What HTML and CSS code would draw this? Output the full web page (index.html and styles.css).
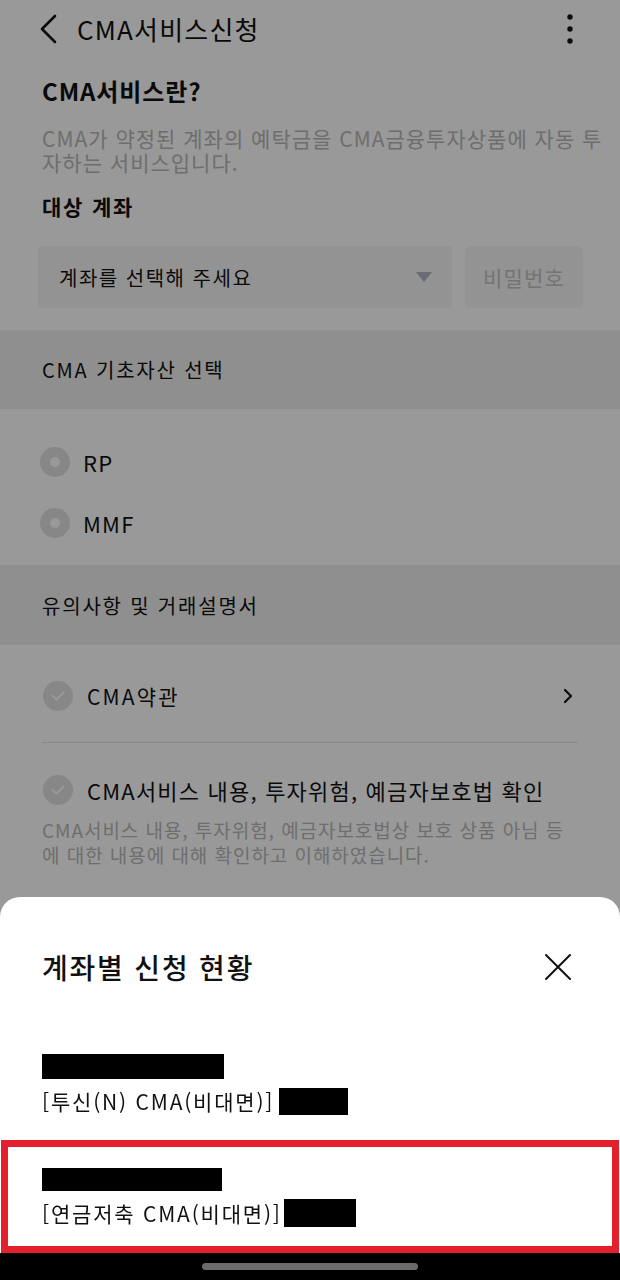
FILE: index.html
```html
<!DOCTYPE html>
<html lang="ko">
<head>
<meta charset="utf-8">
<title>CMA서비스신청</title>
<link rel="stylesheet" href="styles.css">
</head>
<body>
<div class="screen">
  <header class="appbar">
    <svg class="back" width="18" height="30" viewBox="0 0 18 30"><polyline points="16,2 3,15 16,28" fill="none" stroke="#111" stroke-width="2.6" stroke-linecap="round" stroke-linejoin="round"/></svg>
    <h1 class="appbar-title">CMA서비스신청</h1>
    <svg class="kebab" width="8" height="32" viewBox="0 0 8 32"><circle cx="4" cy="4" r="2.7" fill="#111"/><circle cx="4" cy="16" r="2.7" fill="#111"/><circle cx="4" cy="28" r="2.7" fill="#111"/></svg>
  </header>

  <section class="intro">
    <h2 class="intro-title">CMA서비스란?</h2>
    <p class="intro-desc">CMA가 약정된 계좌의 예탁금을 CMA금융투자상품에 자동 투자하는 서비스입니다.</p>
    <h3 class="field-label">대상 계좌</h3>
    <div class="account-row">
      <div class="select"><span class="select-text">계좌를 선택해 주세요</span><span class="caret"></span></div>
      <div class="pw-btn">비밀번호</div>
    </div>
  </section>

  <div class="band">CMA 기초자산 선택</div>
  <section class="radios">
    <div class="radio"><span class="radio-dot"></span><span class="radio-label">RP</span></div>
    <div class="radio"><span class="radio-dot"></span><span class="radio-label">MMF</span></div>
  </section>

  <div class="band">유의사항 및 거래설명서</div>
  <section class="terms">
    <div class="term-row">
      <span class="check"><svg width="14" height="10" viewBox="0 0 14 10"><polyline points="1.5,5 5.5,8.5 12.5,1.5" fill="none" stroke="#fff" stroke-width="2" stroke-linecap="round" stroke-linejoin="round"/></svg></span>
      <span class="term-text">CMA약관</span>
      <svg class="chev" width="10" height="16" viewBox="0 0 10 16"><polyline points="2,2 8,8 2,14" fill="none" stroke="#111" stroke-width="2.2" stroke-linecap="round" stroke-linejoin="round"/></svg>
    </div>
    <div class="term-item">
      <div class="term-head">
        <span class="check"><svg width="14" height="10" viewBox="0 0 14 10"><polyline points="1.5,5 5.5,8.5 12.5,1.5" fill="none" stroke="#fff" stroke-width="2" stroke-linecap="round" stroke-linejoin="round"/></svg></span>
        <span class="term-text term-text-lg">CMA서비스 내용, 투자위험, 예금자보호법 확인</span>
      </div>
      <p class="term-desc">CMA서비스 내용, 투자위험, 예금자보호법상 보호 상품 아님 등에 대한 내용에 대해 확인하고 이해하였습니다.</p>
    </div>
  </section>
</div>

<div class="dim"></div>

<div class="sheet">
  <div class="sheet-head">
    <h2 class="sheet-title">계좌별 신청 현황</h2>
    <svg class="close" width="28" height="28" viewBox="0 0 28 28"><path d="M2 2 L26 26 M26 2 L2 26" stroke="#111" stroke-width="2" stroke-linecap="round"/></svg>
  </div>
  <div class="acct-list">
    <div class="acct">
      <div class="redact redact-no"></div>
      <div class="acct-name">[투신(N) CMA(비대면)]<span class="redact redact-tail"></span></div>
    </div>
    <div class="acct acct-marked">
      <div class="redact redact-no2"></div>
      <div class="acct-name">[연금저축 CMA(비대면)]<span class="redact redact-tail2"></span></div>
    </div>
  </div>
  <div class="navbar"><span class="nav-pill"></span></div>
</div>
</body>
</html>
```

FILE: styles.css
```css
* { box-sizing: border-box; }
html, body { margin: 0; padding: 0; }
body {
  width: 620px;
  height: 1280px;
  overflow: hidden;
  background: #fff;
  font-family: "Noto Sans CJK KR", "Noto Sans", sans-serif;
  color: #111;
}
h1, h2, h3, p { margin: 0; font-weight: normal; }

.screen { background: #fff; }

.appbar {
  height: 58px;
  display: flex;
  align-items: center;
  padding: 0 46px 0 39px;
}
.back { flex: none; }
.appbar-title {
  margin-left: 20px;
  font-size: 26px;
  line-height: 34px;
  letter-spacing: 1.2px;
  flex: 1;
}
.kebab { flex: none; }

.intro { padding: 17px 14px 0 42px; }
.intro-title {
  font-size: 24px;
  line-height: 32px;
  font-weight: 700;
  letter-spacing: 0.9px;
}
.intro-desc {
  margin-top: 19px;
  font-size: 21px;
  line-height: 24px;
  color: #b8b8b8;
  letter-spacing: 1px;
  word-break: break-all;
}
.field-label {
  margin-top: 18px;
  font-size: 21px;
  line-height: 28px;
  font-weight: 700;
  letter-spacing: 1.8px;
}
.account-row {
  margin: 26px 23px 22px -4px;
  display: flex;
  gap: 13px;
  height: 62px;
}
.select {
  flex: 1;
  background: #f5f5f5;
  border-radius: 4px;
  display: flex;
  align-items: center;
  justify-content: space-between;
  padding: 0 20px 0 21px;
  font-size: 20px;
  letter-spacing: 1.5px;
}
.caret {
  width: 0; height: 0;
  border-left: 8px solid transparent;
  border-right: 8px solid transparent;
  border-top: 10px solid #b0b5c0;
}
.pw-btn {
  width: 118px;
  background: #f5f5f5;
  border-radius: 6px;
  display: flex;
  align-items: center;
  justify-content: center;
  font-size: 21px;
  letter-spacing: 1.2px;
  color: #c2c2c2;
}

.band {
  height: 79px;
  background: #eeeeee;
  display: flex;
  align-items: center;
  padding-left: 42px;
  font-size: 20px;
  letter-spacing: 1.8px;
}
.radios { padding: 22px 0 12px 40px; }
.radio {
  height: 61px;
  display: flex;
  align-items: center;
  gap: 13px;
}
.radio-dot {
  width: 30px; height: 30px;
  border-radius: 50%;
  background: #e1e1e1;
  display: flex;
  align-items: center;
  justify-content: center;
}
.radio-dot::after {
  content: "";
  width: 10px; height: 10px;
  border-radius: 50%;
  background: #fff;
}
.radio-label { font-size: 22px; letter-spacing: 1.2px; }
.radios + .band { height: 80px; }

.terms { padding: 0 42px; }
.term-row {
  height: 98px;
  padding-top: 4px;
  display: flex;
  align-items: center;
  border-bottom: 1px solid #e2e2e2;
}
.check {
  width: 30px; height: 30px;
  border-radius: 50%;
  background: #e1e1e1;
  display: flex;
  align-items: center;
  justify-content: center;
  flex: none;
  margin-left: 1px;
}
.term-text {
  margin-left: 14px;
  font-size: 21px;
  letter-spacing: 2.2px;
  flex: 1;
}
.chev { margin-right: 5px; }
.term-item { padding-top: 27px; }
.term-head {
  height: 40px;
  display: flex;
  align-items: center;
}
.term-text-lg { font-size: 22px; letter-spacing: 1.2px; }
.term-desc {
  margin-top: 7px;
  font-size: 19px;
  line-height: 25px;
  color: #b8b8b8;
  letter-spacing: 0.95px;
  word-break: break-all;
}

.dim {
  position: fixed;
  inset: 0;
  background: rgba(0, 0, 0, 0.4);
}

.sheet {
  position: fixed;
  left: 0; right: 0; bottom: 0;
  height: 383px;
  background: #fff;
  border-radius: 20px 20px 0 0;
  display: flex;
  flex-direction: column;
}
.sheet-head {
  padding: 52px 48px 0 42px;
  display: flex;
  align-items: center;
  justify-content: space-between;
}
.sheet-title {
  font-size: 28px;
  line-height: 36px;
  font-weight: 500;
  letter-spacing: 1.8px;
}
.acct-list { margin-top: auto; }
.acct { padding: 0 0 24px 42px; }
.redact { background: #000; }
.redact-no { width: 182px; height: 25px; }
.acct-name {
  margin-top: 7px;
  font-size: 21px;
  line-height: 30px;
  letter-spacing: 1.8px;
  display: flex;
  align-items: center;
}
.redact-tail { display: inline-block; width: 69px; height: 27px; margin-left: 5px; }
.acct-marked {
  margin: 0 1px;
  border: 7px solid #e3202b;
  padding: 21px 0 18px 34px;
}
.redact-no2 { width: 180px; height: 23px; }
.redact-tail2 { display: inline-block; width: 72px; height: 28px; margin-left: 2px; }

.navbar {
  height: 27px;
  background: #000;
  display: flex;
  justify-content: center;
  padding-top: 10px;
}
.nav-pill {
  width: 216px;
  height: 7px;
  border-radius: 4px;
  background: #6b6b6b;
}
```
